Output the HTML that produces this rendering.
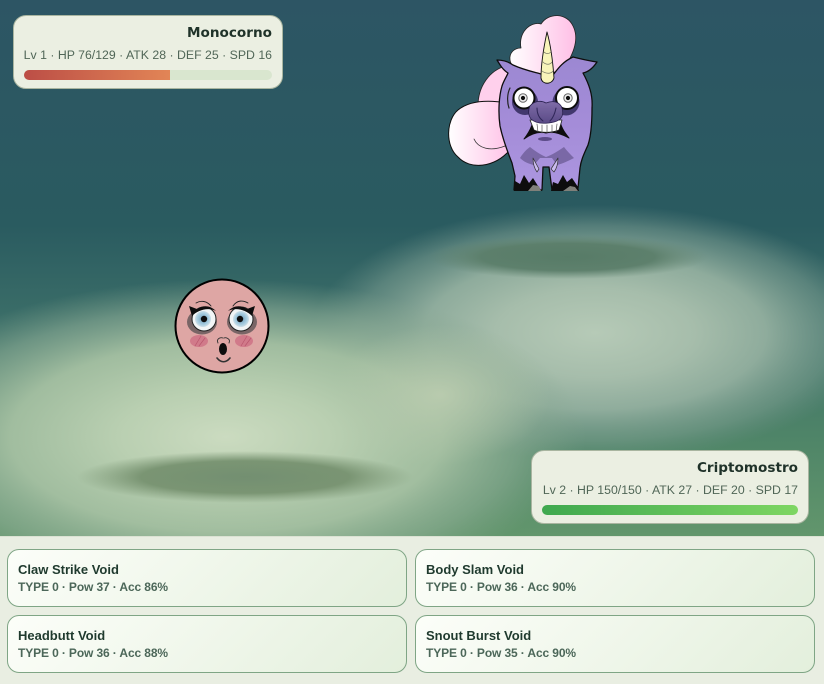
<!DOCTYPE html>
<html><head><meta charset="utf-8">
<style>
*{box-sizing:border-box}
html,body{margin:0;padding:0;width:824px;height:684px;overflow:hidden;background:#e9eee1;font-family:"Liberation Sans",sans-serif}
#scene{position:absolute;left:0;top:0;width:824px;height:536px}
.panel{position:absolute;height:74px;background:#ebefe2;border:1px solid #a9b5a0;border-radius:13px}
.name{position:absolute;right:10px;top:8px;font-family:"DejaVu Sans","Liberation Sans",sans-serif;font-weight:700;font-size:13.6px;line-height:18px;color:#1f3229;white-space:nowrap}
.stat{position:absolute;right:10px;top:31px;font-size:12.3px;line-height:16px;color:#506657;white-space:nowrap}
.track{position:absolute;left:10px;right:10px;top:54px;height:10px;border-radius:5px;background:#d9e6cf;overflow:hidden}
.fill{height:10px}
#bottom{position:absolute;left:0;top:536px;width:824px;height:148px;background:#e9eee2;border-top:1px solid #dbe2d3}
.mv{position:absolute;width:400px;height:58px;border:1px solid #7fa585;border-radius:12px;background:linear-gradient(135deg,#fcfef9,#e3efdc)}
.t{position:absolute;left:10px;top:11px;font-size:13px;line-height:17px;font-weight:700;color:#1f3a2e;white-space:nowrap}
.s{position:absolute;left:10px;top:29px;font-size:12px;line-height:16px;font-weight:700;color:#4c6759;white-space:nowrap;letter-spacing:-.12px}
</style></head><body>
<svg id="scene" width="824" height="536" viewBox="0 0 824 536" xmlns="http://www.w3.org/2000/svg">
<defs>
<linearGradient id="sky" x1="0" y1="0" x2="0" y2="1">
<stop offset="0" stop-color="#2d5564"/><stop offset=".42" stop-color="#2a5b60"/><stop offset=".62" stop-color="#3d7069"/><stop offset=".82" stop-color="#4f8568"/><stop offset="1" stop-color="#62966c"/>
</linearGradient>
<radialGradient id="hillL">
<stop offset="0" stop-color="#cbdbc0"/><stop offset=".3" stop-color="#b9cfb1"/><stop offset=".6" stop-color="#a5c0a2" stop-opacity=".95"/><stop offset=".82" stop-color="#92b098" stop-opacity=".55"/><stop offset="1" stop-color="#86a68e" stop-opacity="0"/>
</radialGradient>
<radialGradient id="hillR">
<stop offset="0" stop-color="#b6cab7"/><stop offset=".35" stop-color="#a6bdab"/><stop offset=".6" stop-color="#93af9f" stop-opacity=".95"/><stop offset=".84" stop-color="#7f9f92" stop-opacity=".5"/><stop offset="1" stop-color="#6f9188" stop-opacity="0"/>
</radialGradient>
<radialGradient id="hillM">
<stop offset="0" stop-color="#bccdb0" stop-opacity=".9"/><stop offset="1" stop-color="#b5c8ac" stop-opacity="0"/>
</radialGradient>
<radialGradient id="shL">
<stop offset="0" stop-color="#738f71"/><stop offset=".62" stop-color="#779270" stop-opacity=".95"/><stop offset="1" stop-color="#7c9776" stop-opacity="0"/>
</radialGradient>
<radialGradient id="shR">
<stop offset="0" stop-color="#577b67"/><stop offset=".62" stop-color="#5b7e6a" stop-opacity=".95"/><stop offset="1" stop-color="#648673" stop-opacity="0"/>
</radialGradient>
<linearGradient id="pink" x1="0" y1="0" x2="1" y2="0"><stop offset="0" stop-color="#fff"/><stop offset="1" stop-color="#ffbfe6"/></linearGradient>
<linearGradient id="fur" x1="0" y1="0" x2="0" y2="1"><stop offset="0" stop-color="#9c88d2"/><stop offset=".5" stop-color="#a48cd8"/><stop offset="1" stop-color="#ac96e0"/></linearGradient>
<linearGradient id="nose" x1="0" y1="0" x2="0" y2="1"><stop offset="0" stop-color="#7f6ca8"/><stop offset="1" stop-color="#5a4b86"/></linearGradient>
<radialGradient id="iris"><stop offset="0" stop-color="#6f9cb8"/><stop offset=".7" stop-color="#a6cce0"/><stop offset="1" stop-color="#cfe0e8"/></radialGradient>
<filter id="soft" x="-5%" y="-5%" width="110%" height="110%"><feGaussianBlur stdDeviation=".35"/></filter>
</defs>
<rect width="824" height="536" fill="url(#sky)"/>
<ellipse cx="595" cy="333" rx="285" ry="128" fill="url(#hillR)"/>
<ellipse cx="226" cy="437" rx="360" ry="158" fill="url(#hillL)"/>
<ellipse cx="440" cy="395" rx="110" ry="70" fill="url(#hillM)"/>
<ellipse cx="245" cy="477" rx="168" ry="26" fill="url(#shL)"/>
<ellipse cx="568" cy="257" rx="140" ry="22" fill="url(#shR)"/>

<!-- Monocorno -->
<g stroke-linejoin="round" stroke-linecap="round" filter="url(#soft)">
<path d="M506 66C490 70 478 86 478 106L508 150L520 100Z" fill="#ffd0ec" stroke="#222" stroke-width=".8"/>
<path d="M508 103C490 100 470 100 458 110C446 120 445 146 458 157C470 170 494 168 510 150L512 130Z" fill="url(#pink)" stroke="#111" stroke-width="1"/>
<path d="M474 139C478 148 490 152 505 146" fill="none" stroke="#333" stroke-width=".8"/>
<path d="M510 60C509 52 515 48 521 48C518 33 530 21 541 24C549 12 567 13 573 26C579 38 575 52 563 70L530 78C522 72 511 68 510 60Z" fill="url(#pink)" stroke="#222" stroke-width=".8"/>
<path d="M497 60C503 60 509 62 513 65C524 70 534 72 541 74L553 75C557 70 562 62 573 57C581 59 590 61 597 62C593 68 588 72 583 73C589 84 593 95 592 108C592 122 591 136 588 145C584 154 581 160 580 168L578 188L552 190L549 167L543 167L542 190L514 190L515 176L512 163C508 153 503 140 500 126C498 112 499 96 502 86C504 80 507 76 508 73C503 70 500 65 497 60Z" fill="url(#fur)" stroke="#111" stroke-width="1.3"/>
<path d="M520 158C523 153 527 149 530 147C535 151 541 155 546 157C552 155 558 151 564 147C567 151 571 155 574 158C568 161 562 164 557 165L552 158L540 158L534 165C529 164 524 162 520 158Z" fill="#7a68a6"/>
<path d="M533 158L539 169L537 172C534 168 533 163 533 158ZM558 158L551 169L554 172C557 168 558 163 558 158Z" fill="#cbbcef" stroke="#333" stroke-width=".7"/>
<path d="M514 191L515 181L520 184L524 175L529 183L533 178L538 186L542 191Z" fill="#0a0a0a"/>
<path d="M551 191L553 182L558 184L563 175L567 182L572 178L578 187L579 191Z" fill="#0a0a0a"/>
<path d="M528 191L533 185L539 186L541 191ZM563 191L570 186L575 187L578 191Z" fill="#80807a"/>
<path d="M510 88C507 94 507 102 509 108" fill="none" stroke="#222" stroke-width="1.2"/>
<circle cx="525" cy="102" r="13" fill="#43376e"/>
<circle cx="566" cy="102" r="13.5" fill="#43376e"/>
<circle cx="524" cy="98" r="10.5" fill="#fff" stroke="#0c0c0c" stroke-width="2"/>
<circle cx="567" cy="98" r="11" fill="#fff" stroke="#0c0c0c" stroke-width="2"/>
<circle cx="523" cy="98" r="4.2" fill="#eee" stroke="#666" stroke-width="1"/><circle cx="523" cy="98" r="2.1" fill="#111"/>
<circle cx="568" cy="98" r="4.2" fill="#eee" stroke="#666" stroke-width="1"/><circle cx="568" cy="98" r="2.1" fill="#111"/>
<path d="M524 139C528 134 531 129 533 122L560 122C562 129 565 133 569 138C560 133 552 131 546 133C538 131 531 134 524 139Z" fill="#0a0a0a" stroke="#0a0a0a" stroke-width="1"/>
<path d="M530 120L562 120L559 130C552 133 540 133 534 130Z" fill="#fff" stroke="#222" stroke-width=".8"/>
<path d="M537 124L538 132M542 125L542 133M547 125L547 133M552 125L552 133M557 124L556 132" stroke="#555" stroke-width=".7"/>
<path d="M530 106C534 101 541 100 546 103C553 100 560 102 562 108C564 115 562 120 554 122C545 124 536 124 531 119C528 115 528 110 530 106Z" fill="url(#nose)" stroke="#2a2050" stroke-width=".8"/>
<path d="M537 108C537 113 539 118 543 121M556 108C555 113 553 118 550 121" fill="none" stroke="#2f2558" stroke-width="1"/>
<ellipse cx="545" cy="139" rx="7" ry="2" fill="#5c4b88"/>
<path d="M547 32C551 46 553 64 554 78C552 85 542 85 541 78C541 62 544 46 547 32Z" fill="#f8f4ba" stroke="#111" stroke-width=".9"/>
<path d="M544 52C546 54 549 54 551 52M543 62C546 65 550 65 552 62M542 71C546 74 551 74 553 71" fill="none" stroke="#776" stroke-width=".7"/>
</g>

<!-- Criptomostro -->
<g stroke-linecap="round" stroke-linejoin="round" filter="url(#soft)">
<circle cx="222" cy="326" r="46.5" fill="#dea6a4" stroke="#050505" stroke-width="2"/>
<ellipse cx="202" cy="322" rx="15" ry="12.5" fill="#4f4a4c" opacity=".7"/>
<ellipse cx="242" cy="322" rx="15" ry="12.5" fill="#4f4a4c" opacity=".7"/>
<circle cx="204" cy="319" r="12" fill="#f2f5f6" stroke="#222" stroke-width="1"/>
<circle cx="241" cy="319" r="12" fill="#f2f5f6" stroke="#222" stroke-width="1"/>
<circle cx="203" cy="319" r="8" fill="url(#iris)"/>
<circle cx="241" cy="319" r="8" fill="url(#iris)"/>
<circle cx="204" cy="319" r="3.2" fill="#111"/>
<circle cx="240" cy="319" r="3.2" fill="#111"/>
<path d="M189 306L197 309C203 305 210 305 216 311C208 307 198 310 192 316Z" fill="#111"/>
<path d="M255 306L247 309C241 305 234 305 228 311C236 307 246 310 252 316Z" fill="#111"/>
<path d="M196 303C201 300 207 301 211 306M233 306C237 300 243 300 248 303" fill="none" stroke="#222" stroke-width=".9"/>
<ellipse cx="199" cy="341" rx="9" ry="6" fill="#d17a8a"/>
<ellipse cx="244" cy="341" rx="9" ry="6" fill="#d17a8a"/>
<path d="M195 346L201 336M199 346L205 338M241 346L247 336M245 346L251 338" stroke="#b9566c" stroke-width=".7"/>
<ellipse cx="223" cy="349" rx="4" ry="6" fill="#0b0b0b"/>
<path d="M218 343C216 339 220 337 223 338M229 343C231 339 226 337 224 338" fill="none" stroke="#333" stroke-width=".9"/>
<path d="M217 358C221 363 226 363 230 358" fill="none" stroke="#333" stroke-width="1.6"/>
</g>
</svg>

<div class="panel" style="left:13px;top:15px;width:270px">
<div class="name">Monocorno</div>
<div class="stat">Lv 1 · HP 76/129 · ATK 28 · DEF 25 · SPD 16</div>
<div class="track"><div class="fill" style="width:146px;background:linear-gradient(90deg,#bc4e46,#e28556)"></div></div>
</div>
<div class="panel" style="left:531px;top:450px;width:278px">
<div class="name">Criptomostro</div>
<div class="stat">Lv 2 · HP 150/150 · ATK 27 · DEF 20 · SPD 17</div>
<div class="track"><div class="fill" style="width:100%;background:linear-gradient(90deg,#3fa84f,#7ed663)"></div></div>
</div>

<div id="bottom"></div>
<div class="mv" style="left:7px;top:549px"><div class="t">Claw Strike Void</div><div class="s">TYPE 0 · Pow 37 · Acc 86%</div></div>
<div class="mv" style="left:415px;top:549px"><div class="t">Body Slam Void</div><div class="s">TYPE 0 · Pow 36 · Acc 90%</div></div>
<div class="mv" style="left:7px;top:615px"><div class="t">Headbutt Void</div><div class="s">TYPE 0 · Pow 36 · Acc 88%</div></div>
<div class="mv" style="left:415px;top:615px"><div class="t">Snout Burst Void</div><div class="s">TYPE 0 · Pow 35 · Acc 90%</div></div>
</body></html>
